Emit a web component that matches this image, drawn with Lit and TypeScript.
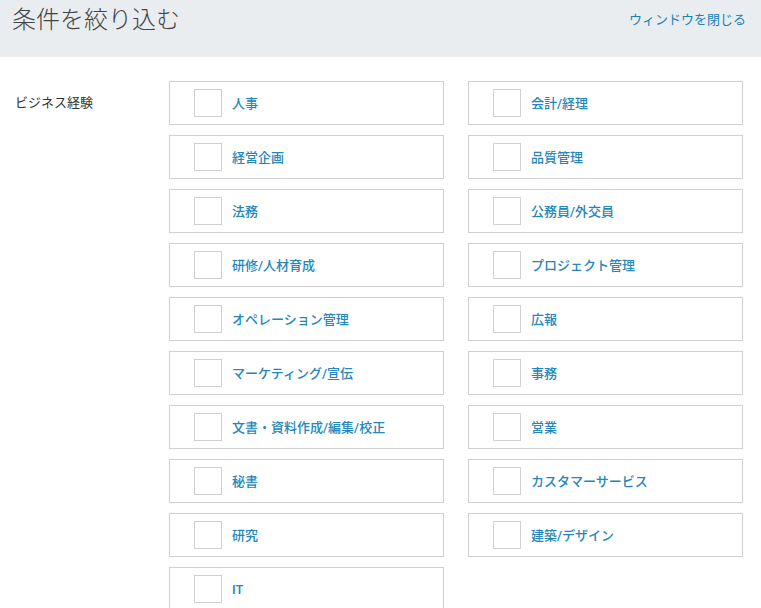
import { LitElement, html, css } from "lit";
import { customElement } from "lit/decorators.js";

const ITEMS = [
  "人事", "会計/経理", "経営企画", "品質管理", "法務", "公務員/外交員",
  "研修/人材育成", "プロジェクト管理", "オペレーション管理", "広報",
  "マーケティング/宣伝", "事務", "文書・資料作成/編集/校正", "営業",
  "秘書", "カスタマーサービス", "研究", "建築/デザイン", "IT",
];

@customElement("app-root")
export class AppRoot extends LitElement {
  static styles = css`
    :host {
      display: block;
      height: 608px;
      overflow: hidden;
      background: #fff;
      font-family: "Roboto", "Noto Sans CJK JP", sans-serif;
    }
    .header {
      height: 57px;
      box-sizing: border-box;
      background: #e9edf0;
      display: flex;
      justify-content: space-between;
      align-items: flex-start;
      padding: 0 15px 0 12px;
    }
    .title {
      margin: 0;
      font-size: 24px;
      font-weight: 300;
      line-height: 40px;
      color: #444;
    }
    .close {
      font-size: 13px;
      line-height: 40px;
      color: #1a82b8;
      text-decoration: none;
    }
    .body {
      display: flex;
      padding-top: 24px;
    }
    .label {
      width: 169px;
      box-sizing: border-box;
      padding-left: 15px;
      font-size: 13px;
      line-height: 44px;
      color: #333;
      flex: none;
    }
    .grid {
      display: grid;
      grid-template-columns: 275px 275px;
      column-gap: 24px;
      row-gap: 10px;
    }
    .item {
      height: 44px;
      box-sizing: border-box;
      border: 1px solid #d0d0d0;
      display: flex;
      align-items: center;
      padding-left: 24px;
      gap: 10px;
    }
    .box {
      width: 28px;
      height: 28px;
      box-sizing: border-box;
      border: 1px solid #d0d0d0;
      flex: none;
    }
    .text {
      font-size: 13px;
      font-weight: 500;
      line-height: 20px;
      margin-top: 2px;
      color: #2486ba;
    }
  `;

  render() {
    return html`
      <div class="header">
        <h1 class="title">条件を絞り込む</h1>
        <a class="close" href="#">ウィンドウを閉じる</a>
      </div>
      <div class="body">
        <div class="label">ビジネス経験</div>
        <div class="grid">
          ${ITEMS.map(
            (t) => html`<div class="item"><span class="box"></span><span class="text">${t}</span></div>`
          )}
        </div>
      </div>
    `;
  }
}
